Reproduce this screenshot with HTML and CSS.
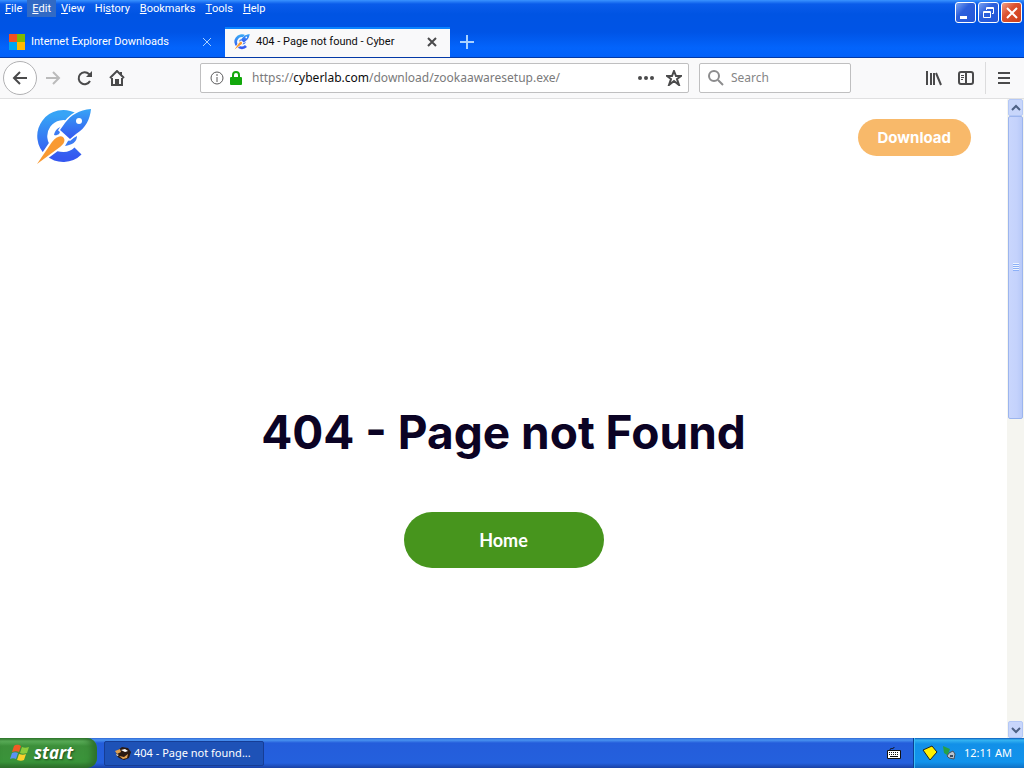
FILE: index.html
```html
<!DOCTYPE html>
<html lang="en">
    <head>
        <meta charset="utf-8">
        <title>404 - Page not found - Cyber</title>
        <link rel="stylesheet" href="styles.css">
    </head>
    <body>
        <svg class="defs" aria-hidden="true">
            <defs>
                <linearGradient id="blue" x1="0" y1="0" x2="0" y2="1">
                    <stop offset="0" stop-color="#37a4f6"/>
                    <stop offset="1" stop-color="#3558f0"/>
                </linearGradient>
                <symbol id="cyber" viewBox="0 0 56 56">
                    <path fill="none" stroke="url(#blue)" stroke-width="10" d="M38 9A21 21 0 1 0 42 42"/>
                    <path fill="#3d7cf4" d="M18 26c1-5 4-8 10-9l-4 6-2 4zM29 37c7-1 12-4 12-10l-4 2-5 3z"/>
                    <path fill="url(#blue)" stroke="#fff" stroke-width="3" paint-order="stroke" d="M55 0C43 1 35 6 29 14l-5 7 10 9 6-5C50 19 54 10 55 0z"/>
                    <circle cx="43" cy="12" r="3" fill="#fff"/>
                    <path fill="#f99a32" stroke="#fff" stroke-width="4" paint-order="stroke" d="M16 33c4-5 8-7 11-5 3 3 1 7-3 10L1 55z"/>
                </symbol>
                <symbol id="flag" viewBox="0 0 20 20">
                    <path fill="#f15a25" d="M4 3c3-2 5-1 7 0L9 9C7 8 5 8 2 9z"/>
                    <path fill="#8ccc3c" d="M12 4c2 1 4 1 7 0l-2 6c-3 1-5 1-7 0z"/>
                    <path fill="#5b92f3" d="M2 10c2-1 4-1 6 0l-2 6c-2-1-4-1-6 0z"/>
                    <path fill="#fbd02c" d="M9 11c3 1 5 1 7 0l-2 6c-2 1-4 1-7 0z"/>
                </symbol>
            </defs>
        </svg>

        <header class="titlebar">
            <div class="menu-row">
                <nav class="menu">
                    <button><u>F</u>ile</button>
                    <button class="hover"><u>E</u>dit</button>
                    <button><u>V</u>iew</button>
                    <button>Hi<u>s</u>tory</button>
                    <button><u>B</u>ookmarks</button>
                    <button><u>T</u>ools</button>
                    <button><u>H</u>elp</button>
                </nav>
                <div class="window-buttons">
                    <button aria-label="Minimize"><svg viewBox="0 0 18 18"><path fill="#fff" d="M3 12h7v3H3z"/></svg></button>
                    <button aria-label="Restore"><svg viewBox="0 0 18 18"><path fill="none" stroke="#fff" d="M3.500 7.500h7v6h-7zM3 8.500h8M6.500 6V3.500h7v6H12M6 4.500h8"/></svg></button>
                    <button class="close-window" aria-label="Close"><svg viewBox="0 0 18 18"><path fill="none" stroke="#fff" stroke-width="2" d="M4 4l10 10M14 4L4 14"/></svg></button>
                </div>
            </div>
            <div class="tabs">
                <div class="tab">
                    <svg class="favicon" viewBox="0 0 16 16"><path fill="#f25022" d="M0 0h8v8H0z"/><path fill="#7fba00" d="M8 0h8v8H8z"/><path fill="#00a4ef" d="M0 8h8v8H0z"/><path fill="#ffb900" d="M8 8h8v8H8z"/></svg>
                    <span class="tab-title">Internet Explorer Downloads</span>
                    <button class="tab-close" aria-label="Close tab"><svg viewBox="0 0 10 10"><path d="M1 1l8 8M9 1L1 9"/></svg></button>
                </div>
                <div class="tab active">
                    <svg class="favicon"><use href="#cyber"/></svg>
                    <span class="tab-title">404 - Page not found - Cyber</span>
                    <button class="tab-close" aria-label="Close tab"><svg viewBox="0 0 10 10"><path d="M1 1l8 8M9 1L1 9"/></svg></button>
                </div>
                <button class="new-tab" aria-label="New tab"><svg viewBox="0 0 14 14"><path d="M7 0v14M0 7h14"/></svg></button>
            </div>
        </header>

        <div class="navbar">
            <button class="nav-button back" aria-label="Back"><svg viewBox="0 0 16 16"><path d="M15 8H2M8 2L2 8l6 6"/></svg></button>
            <button class="nav-button forward" aria-label="Forward"><svg viewBox="0 0 16 16"><path d="M1 8h13M8 2l6 6-6 6"/></svg></button>
            <button class="nav-button" aria-label="Reload"><svg viewBox="0 0 16 16"><path d="M13 11a6 6 0 1 1-1-7l2 2"/><path class="solid" d="M15 1v6H9z"/></svg></button>
            <button class="nav-button" aria-label="Home page"><svg viewBox="0 0 16 16"><path d="M1 8l7-7 7 7M3 8v7h10V8M12 2v3"/><path class="solid" d="M6 9h4v6H6z"/></svg></button>
            <div class="urlbar">
                <svg class="info" viewBox="0 0 14 14"><circle cx="7" cy="7" r="6"/><path d="M7 6v5M7 3v2"/></svg>
                <svg class="lock" viewBox="0 0 12 14"><path fill="none" stroke="#12a80c" stroke-width="2" d="M3 7V4a3 3 0 0 1 6 0v3"/><rect y="6" width="12" height="8" rx="1" fill="#12a80c"/></svg>
                <a class="url" href="#">https://<b>cyberlab.com</b>/download/zookaawaresetup.exe/</a>
                <button class="nav-button" aria-label="Page actions"><svg viewBox="0 0 16 16"><g class="solid"><circle cx="2" cy="8" r="2"/><circle cx="8" cy="8" r="2"/><circle cx="14" cy="8" r="2"/></g></svg></button>
                <button class="nav-button" aria-label="Bookmark this page"><svg viewBox="0 0 16 16"><path d="M8 1l2 5h5l-4 3 2 6-5-4-5 4 2-6-4-3h5z"/></svg></button>
            </div>
            <label class="search">
                <svg viewBox="0 0 16 16"><circle cx="6" cy="6" r="5"/><path d="M10 10l5 5"/></svg>
                <input type="text" placeholder="Search" aria-label="Search">
            </label>
            <div class="toolbar-end">
                <button class="nav-button" aria-label="Library"><svg viewBox="0 0 16 16"><path d="M1 1v14M5 3v12M8 3v12M10 3l5 12"/></svg></button>
                <button class="nav-button" aria-label="Sidebars"><svg viewBox="0 0 16 16"><rect x="1" y="2" width="14" height="12" rx="2"/><path d="M8 2v12"/><path class="thin" d="M3 5.500h3M3 7.500h3M3 9.500h2"/></svg></button>
                <button class="nav-button app-menu" aria-label="Open menu"><svg viewBox="0 0 16 16"><path d="M2 3h12M2 8h12M2 13h12"/></svg></button>
            </div>
        </div>

        <div class="viewport">
            <div class="page">
                <header class="page-header">
                    <a href="#" aria-label="Cyberlab"><svg class="logo"><use href="#cyber"/></svg></a>
                    <a class="download" href="#">Download</a>
                </header>
                <main class="not-found">
                    <h1>404 - Page not Found</h1>
                    <a class="home" href="#">Home</a>
                </main>
            </div>
            <div class="scrollbar">
                <button aria-label="Scroll up"><svg viewBox="0 0 10 10"><path d="M1 7l4-4 4 4"/></svg></button>
                <div class="track"><div class="thumb"><i></i></div></div>
                <button aria-label="Scroll down"><svg viewBox="0 0 10 10"><path d="M1 3l4 4 4-4"/></svg></button>
            </div>
        </div>

        <footer class="taskbar">
            <button class="start"><svg><use href="#flag"/></svg>start</button>
            <button class="task">
                <svg viewBox="0 0 16 16"><path fill="#2b1a12" d="M3 5l4-3 6 1 3 4-2 6-5 2-5-2-3-3z"/><path fill="#e0a050" d="M0 6l5-2 1 3-4 2zM4 11l5 1 4-3-1 4-4 1z"/><path fill="#fff" d="M6 5l4-1 3 2-3 1zM1 9l3 1-2 1z"/></svg>
                <span>404 - Page not found...</span>
            </button>
            <svg class="keyboard" viewBox="0 0 14 14"><path fill="none" stroke="#111" d="M3 4c0-3 4 0 4-3"/><path fill="#fff" stroke="#111" d="M.5 4.500h13v8H.5z"/><path fill="none" stroke="#111" stroke-dasharray="1 1" d="M2 6.500h10M2 8.500h10"/><path stroke="#111" d="M3 10.500h8"/></svg>
            <div class="tray">
                <svg viewBox="0 0 16 16"><path fill="#fff200" stroke="#222" d="M1 5l9-4 5 6-7 8z"/></svg>
                <svg viewBox="0 0 16 16"><path fill="#27a045" d="M2 1l7 3-2 5 2 3-6-4z"/><path fill="#b9c4cf" stroke="#47525e" d="M8 8l4-2 2 3-1 5-5-1-2-2z"/><path fill="#3b4a5c" d="M9 10h3v2H9z"/></svg>
                <time>12:11 AM</time>
            </div>
        </footer>
    </body>
</html>
```
FILE: styles.css
```css
* {
    box-sizing: border-box;
}
body {
    display: flex;
    flex-direction: column;
    height: 100vh;
    margin: 0;
    overflow: hidden;
    background: #fff;
    color: #0c0c0d;
    font: 11px/16px "Noto Sans", sans-serif;
}
button {
    display: flex;
    align-items: center;
    justify-content: center;
    flex: none;
    margin: 0;
    padding: 0;
    border: 0;
    background: none;
    color: inherit;
    font: inherit;
}
a {
    color: inherit;
    text-decoration: none;
}
svg {
    display: block;
    flex: none;
}
.defs {
    position: absolute;
    width: 0;
    height: 0;
}

/* title bar */
.titlebar {
    display: flex;
    flex-direction: column;
    justify-content: space-between;
    height: 58px;
    border-bottom: 1px solid #0339a6;
    background: linear-gradient(#3a93ff 0, #0a5cea 4px, #0054e3 14px, #0054e6 32px, #0364fc 48px, #0260f8 100%);
    color: #fff;
}
.menu-row {
    display: flex;
    justify-content: space-between;
    height: 24px;
}
.menu {
    display: flex;
    align-items: flex-start;
    font-family: Roboto, sans-serif;
    line-height: 18px;
}
.menu button {
    height: 17px;
    padding: 0 5px;
}
.menu .hover {
    background: #316ac5;
}
.window-buttons {
    display: flex;
    gap: 2px;
    padding: 2px 2px 0 0;
}
.window-buttons button {
    width: 21px;
    height: 21px;
    border: 1px solid #fff;
    border-radius: 3px;
    background: linear-gradient(135deg, #7ba4f2, #2c5fdc 40%, #2356d8);
}
.window-buttons .close-window {
    background: linear-gradient(135deg, #f0a088, #dd5230 40%, #cb3f1b);
}
.window-buttons svg {
    width: 18px;
    height: 18px;
}
.tabs {
    display: flex;
    height: 30px;
}
.tab {
    display: flex;
    align-items: center;
    flex: 0 1 225px;
    gap: 6px;
    padding: 0 12px 0 9px;
    font-family: Roboto, sans-serif;
    line-height: 18px;
}
.tab.active {
    padding-bottom: 2px;
    border-top: 2px solid #0a84ff;
    background: #f9f9fa;
    color: #0c0c0d;
}
.favicon {
    width: 16px;
    height: 16px;
}
.tab-title {
    flex: 1;
    white-space: nowrap;
}
.tab-close svg {
    width: 12px;
    height: 12px;
    padding: 1px;
}
.tab-close path,
.new-tab path {
    stroke: #a9d2ff;
    stroke-width: 1;
}
.new-tab path {
    stroke-width: 2;
}
.active .tab-close path {
    stroke: #4a4a4b;
    stroke-width: 2;
}
.new-tab {
    width: 34px;
}
.new-tab svg {
    width: 14px;
    height: 14px;
}

/* navigation toolbar */
.navbar {
    display: flex;
    align-items: center;
    height: 41px;
    padding: 0 3px;
    border-bottom: 1px solid #e0e0e1;
    background: #f9f9fa;
}
.nav-button {
    width: 32px;
    height: 32px;
}
.nav-button svg {
    width: 16px;
    height: 16px;
}
.nav-button path,
.nav-button rect {
    fill: none;
    stroke: #4a4a4b;
    stroke-width: 2;
}
.nav-button .solid {
    fill: #4a4a4b;
    stroke: none;
}
.nav-button .thin {
    stroke-width: 1;
}
.back {
    width: 34px;
    height: 34px;
    border: 1px solid #b1b1b3;
    border-radius: 50%;
    background: #fff;
}
.forward path {
    stroke: #bbb;
}
.urlbar,
.search {
    display: flex;
    align-items: center;
    height: 30px;
    border: 1px solid #bfbfc0;
    border-radius: 2px;
    background: #fff;
    font-size: 12px;
    line-height: 18px;
}
.urlbar {
    flex: 1;
    gap: 6px;
    margin: 0 10px 0 67px;
    padding: 0 3px 0 9px;
    color: #7a7a7b;
}
.urlbar .nav-button {
    width: 22px;
    height: 28px;
}
.url {
    flex: 1;
    overflow: hidden;
    padding-left: 4px;
    white-space: nowrap;
}
.url b {
    color: #0c0c0d;
    font-weight: 400;
}
.info {
    width: 14px;
    height: 14px;
    fill: none;
    stroke: #5a5a5b;
}
.lock {
    width: 12px;
    height: 14px;
}
.search {
    flex: 0 1 152px;
    gap: 7px;
    padding: 0 8px;
}
.search svg {
    width: 16px;
    height: 16px;
    fill: none;
    stroke: #8c8c8d;
    stroke-width: 2;
}
.search input {
    flex: 1;
    width: 0;
    padding: 0;
    border: 0;
    outline: 0;
    background: none;
    font: inherit;
}
.search input::placeholder {
    color: #858586;
}
.toolbar-end {
    display: flex;
    margin-left: 67px;
}
.app-menu {
    width: 36px;
    margin-left: 3px;
    border-left: 1px solid #dcdcdd;
}

/* page */
.viewport {
    display: flex;
    flex: 1;
    min-height: 0;
}
.page {
    display: flex;
    flex: 1;
    flex-direction: column;
}
.page-header {
    display: flex;
    align-items: center;
    justify-content: space-between;
    padding: 10px 36px;
}
.logo {
    width: 56px;
    height: 56px;
}
.download {
    padding: 8px 20px;
    border-radius: 20px;
    background: #f8b96a;
    color: #fff;
    font: 700 15px/21px Inter, sans-serif;
}
.not-found {
    display: flex;
    flex: 1;
    flex-direction: column;
    align-items: center;
    justify-content: center;
    gap: 50px;
    padding-top: 56px;
}
.not-found h1 {
    margin: 0;
    color: #0b0324;
    font: 700 46px/60px Inter, sans-serif;
}
.home {
    width: 200px;
    border-radius: 28px;
    background: #47951d;
    color: #fff;
    font: 700 18px/56px Lato, sans-serif;
    text-align: center;
}

/* scrollbar */
.scrollbar {
    display: flex;
    flex-direction: column;
    width: 17px;
    padding: 0 1px;
    background: #f5f5f0;
}
.scrollbar button {
    height: 17px;
    border: 1px solid #b4c8f6;
    border-radius: 2px;
    background: #c8d6fb;
}
.scrollbar button svg {
    width: 10px;
    height: 10px;
    fill: none;
    stroke: #4d6185;
    stroke-width: 2;
}
.track {
    flex: 1;
}
.thumb {
    display: flex;
    align-items: center;
    justify-content: center;
    height: 50%;
    border: 1px solid #9cb5ee;
    border-radius: 2px;
    background: linear-gradient(90deg, #c9d6fd, #c4d2fc 60%, #b8c9f8);
}
.thumb i {
    width: 6px;
    height: 8px;
    background: repeating-linear-gradient(#eef4fe 0, #eef4fe 1px, #8cb0f8 1px, #8cb0f8 2px);
}

/* taskbar */
.taskbar {
    display: flex;
    align-items: center;
    height: 30px;
    background: linear-gradient(#3168d5 0, #4993f0 2px, #245ddb 5px, #2460dd 25px, #1941a5 100%);
    color: #fff;
}
.start {
    gap: 4px;
    width: 97px;
    height: 30px;
    padding-right: 14px;
    border-radius: 0 10px 10px 0;
    background: linear-gradient(#2f7a2d 0, #5fb35d 3px, #3c8f3a 8px, #3a943a 24px, #2c6f2a 100%);
    box-shadow: inset -5px 0 6px #2d702b;
    font: italic 700 17px/24px "Open Sans", sans-serif;
    text-shadow: 1px 1px 2px #1d4a1c;
}
.start svg {
    width: 20px;
    height: 20px;
}
.task {
    justify-content: flex-start;
    gap: 3px;
    width: 160px;
    height: 25px;
    margin-left: 7px;
    padding-left: 10px;
    border: 1px solid #163d95;
    border-radius: 2px;
    background: #1e52b7;
}
.task svg {
    width: 16px;
    height: 16px;
}
.keyboard {
    width: 14px;
    height: 14px;
    margin: 0 12px 0 auto;
}
.tray {
    display: flex;
    align-items: center;
    gap: 3px;
    height: 30px;
    padding: 0 12px 0 8px;
    border-left: 1px solid #0a3f92;
    background: linear-gradient(#0c59b9 0, #36b5f2 2px, #1290e8 6px, #1193ec 24px, #0f70c4 100%);
    box-shadow: inset 1px 0 #3cbdf5;
}
.tray svg {
    width: 16px;
    height: 16px;
}
.tray time {
    margin-left: 4px;
}
```
